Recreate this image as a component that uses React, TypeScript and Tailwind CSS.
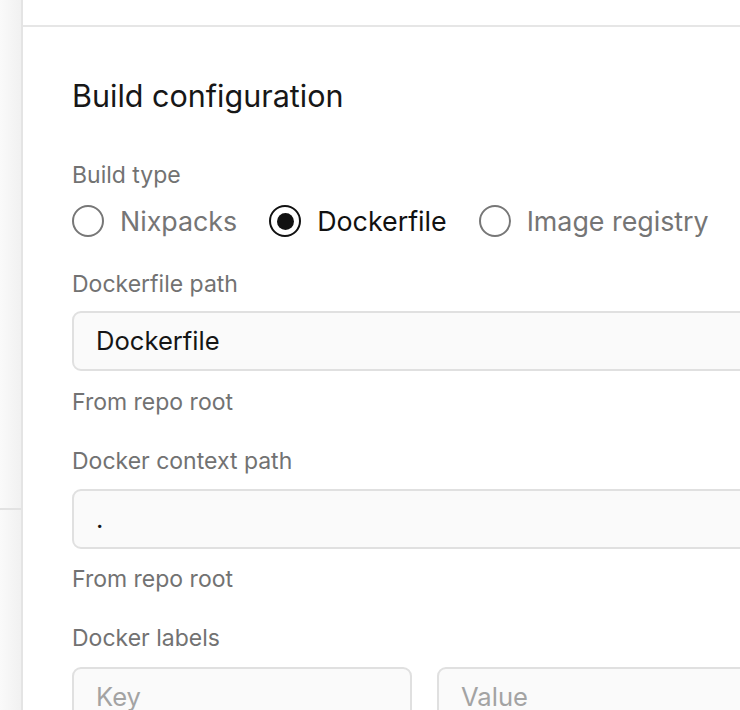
import React from "react";

function Radio({ label, checked }: { label: string; checked?: boolean }) {
  return (
    <label className="flex items-center gap-[16px]">
      {checked ? (
        <span className="flex h-[32px] w-[32px] items-center justify-center rounded-full border-[2px] border-[#111111]">
          <span className="h-[17px] w-[17px] rounded-full bg-[#111111]" />
        </span>
      ) : (
        <span className="h-[32px] w-[32px] rounded-full border-[2px] border-[#777777]" />
      )}
      <span className={checked ? "text-[#111111]" : "text-[#757575]"}>{label}</span>
    </label>
  );
}

export default function App() {
  return (
    <div
      className="flex h-[710px] w-[740px] overflow-hidden bg-white"
      style={{ fontFamily: "Inter, 'Noto Sans', sans-serif" }}
    >
      <aside className="w-[23px] shrink-0 border-r-[2px] border-[#e4e4e4] bg-gradient-to-r from-[#fafafa] to-[#f1f1f1]">
        <div className="h-[510px] border-b-[2px] border-[#e2e2e2]" />
      </aside>
      <main className="flex min-w-0 flex-1 flex-col">
        <div className="h-[27px] shrink-0 border-b-[2px] border-[#e6e6e6]" />
        <div className="pl-[49px] pt-[52px]">
          <h2 className="text-[30.5px] leading-[34px] text-[#171717]">Build configuration</h2>
          <div className="mt-[49px] text-[23px] leading-[26px] text-[#727272]">Build type</div>
          <div className="mt-[17px] flex items-center gap-[32px] text-[26.8px] leading-[32px]">
            <Radio label="Nixpacks" />
            <Radio label="Dockerfile" checked />
            <Radio label="Image registry" />
          </div>
          <div className="mt-[34px] text-[23px] leading-[26px] text-[#727272]">Dockerfile path</div>
          <div className="mt-[14px] flex h-[60px] w-[720px] items-center rounded-[9px] border-[2px] border-[#e0e0e0] bg-[#fafafa] pl-[22px] text-[25.6px] text-[#151515]">
            Dockerfile
          </div>
          <div className="mt-[18px] text-[23px] leading-[26px] text-[#727272]">From repo root</div>
          <div className="mt-[33px] text-[23px] leading-[26px] text-[#727272]">Docker context path</div>
          <div className="mt-[15px] flex h-[60px] w-[720px] items-center rounded-[9px] border-[2px] border-[#e0e0e0] bg-[#fafafa] pl-[22px] text-[25.6px] text-[#151515]">
            .
          </div>
          <div className="mt-[17px] text-[23px] leading-[26px] text-[#727272]">From repo root</div>
          <div className="mt-[33px] text-[23px] leading-[26px] text-[#727272]">Docker labels</div>
          <div className="mt-[16px] flex gap-[25px]">
            <div className="flex h-[60px] w-[340px] shrink-0 items-center rounded-[9px] border-[2px] border-[#e0e0e0] bg-[#fafafa] pl-[22px] text-[25.6px] text-[#a3a3a3]">
              Key
            </div>
            <div className="flex h-[60px] w-[400px] shrink-0 items-center rounded-[9px] border-[2px] border-[#e0e0e0] bg-[#fafafa] pl-[22px] text-[25.6px] text-[#a3a3a3]">
              Value
            </div>
          </div>
        </div>
      </main>
    </div>
  );
}
